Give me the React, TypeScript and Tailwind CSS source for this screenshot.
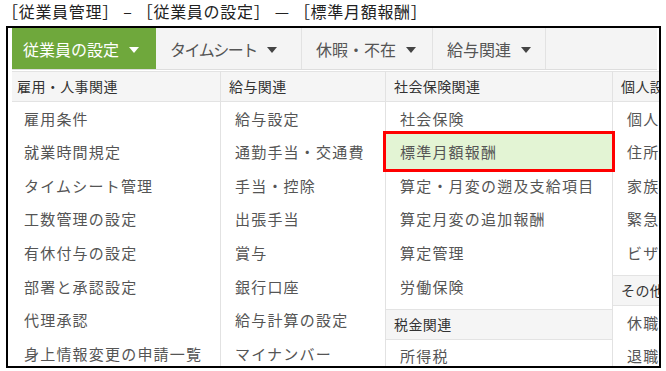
import React from "react";

type Col = {
  width: string;
  hp: string;
  ip: string;
  groups: { title: string; items: string[] }[];
};

const FONT = {
  fontFamily: '"Noto Sans CJK JP", "Noto Sans", sans-serif',
};

const cols: Col[] = [
  {
    width: "w-[208px]",
    hp: "pl-[5px]",
    ip: "pl-[12px]",
    groups: [
      {
        title: "雇用・人事関連",
        items: [
          "雇用条件",
          "就業時間規定",
          "タイムシート管理",
          "工数管理の設定",
          "有休付与の設定",
          "部署と承認設定",
          "代理承認",
          "身上情報変更の申請一覧",
        ],
      },
    ],
  },
  {
    width: "w-[165px]",
    hp: "pl-[8px]",
    ip: "pl-[14px]",
    groups: [
      {
        title: "給与関連",
        items: [
          "給与設定",
          "通勤手当・交通費",
          "手当・控除",
          "出張手当",
          "賞与",
          "銀行口座",
          "給与計算の設定",
          "マイナンバー",
        ],
      },
    ],
  },
  {
    width: "w-[227px]",
    hp: "pl-[8px]",
    ip: "pl-[14px]",
    groups: [
      {
        title: "社会保険関連",
        items: [
          "社会保険",
          "標準月額報酬",
          "算定・月変の遡及支給項目",
          "算定月変の追加報酬",
          "算定管理",
          "労働保険",
        ],
      },
      { title: "税金関連", items: ["所得税"] },
    ],
  },
  {
    width: "w-[120px]",
    hp: "pl-[8px]",
    ip: "pl-[14px]",
    groups: [
      {
        title: "個人設定",
        items: ["個人情報", "住所", "家族情報", "緊急連絡先", "ビザ情報"],
      },
      { title: "その他", items: ["休職", "退職"] },
    ],
  },
];

function Caret({ white }: { white?: boolean }) {
  return (
    <svg width="10" height="6" viewBox="0 0 10 6" className="ml-[10px] mt-[2px] shrink-0">
      <path d="M0 0 L10 0 L5 6 Z" fill={white ? "#ffffff" : "#444444"} />
    </svg>
  );
}

export default function App() {
  const navs = [
    { label: "タイムシート", w: "w-[146px]", t: "tracking-[-1.5px]" },
    { label: "休暇・不在", w: "w-[131px]", t: "" },
    { label: "給与関連", w: "w-[113px]", t: "" },
  ];
  return (
    <div className="w-[666px] h-[371px] bg-white overflow-hidden" style={FONT}>
      <div className="pl-[2px] h-[22px] text-[16px] leading-[22px] tracking-[0.7px] text-[#222] whitespace-nowrap">
        ［従業員管理］ – ［従業員の設定］ — ［標準月額報酬］
      </div>
      <div className="ml-[6px] mt-[4px] w-[655px] h-[342px] border-2 border-black pl-[4px] pr-[2px] pt-[0px] overflow-hidden">
        <div className="flex h-[42px] bg-[#f4f4f4] border-b border-[#dddddd]">
          <div className="w-[144px] h-full bg-[#6fa83c] flex items-center pl-[11px] text-white text-[16px] whitespace-nowrap">
            従業員の設定
            <Caret white />
          </div>
          {navs.map((n) => (
            <div
              key={n.label}
              className={`${n.w} h-full flex items-center pl-[14px] text-[#555] text-[16px] whitespace-nowrap border-r border-[#e2e2e2]`}
            >
              <span className={n.t}>{n.label}</span>
              <Caret />
            </div>
          ))}
        </div>
        <div className="flex pt-[1px]">
          {cols.map((c, ci) => (
            <div
              key={ci}
              className={`${c.width} shrink-0 ${ci > 0 ? "border-l border-[#e2e2e2]" : ""}`}
            >
              {c.groups.map((g, gi) => (
                <div key={gi} className={gi > 0 ? "mt-[5px]" : ""}>
                  <div
                    className={`h-[31px] flex items-center ${c.hp} bg-[#f5f5f5] border-t border-b border-[#e3e3e3] text-[14px] tracking-[0.4px] text-[#333] whitespace-nowrap`}
                  >
                    {g.title}
                  </div>
                  {g.items.map((it) => {
                    const hl = it === "標準月額報酬";
                    return (
                      <div
                        key={it}
                        className={`relative h-[33.6px] flex items-center ${c.ip} text-[15px] tracking-[1.2px] text-[#555] whitespace-nowrap`}
                      >
                        {hl && (
                          <div className="absolute left-[-3px] right-[-3px] top-[-5px] bottom-[-3px] bg-[#e3f4d4] border-[3px] border-[#ff0000]" />
                        )}
                        <span className="relative">{it}</span>
                      </div>
                    );
                  })}
                </div>
              ))}
            </div>
          ))}
        </div>
      </div>
    </div>
  );
}
